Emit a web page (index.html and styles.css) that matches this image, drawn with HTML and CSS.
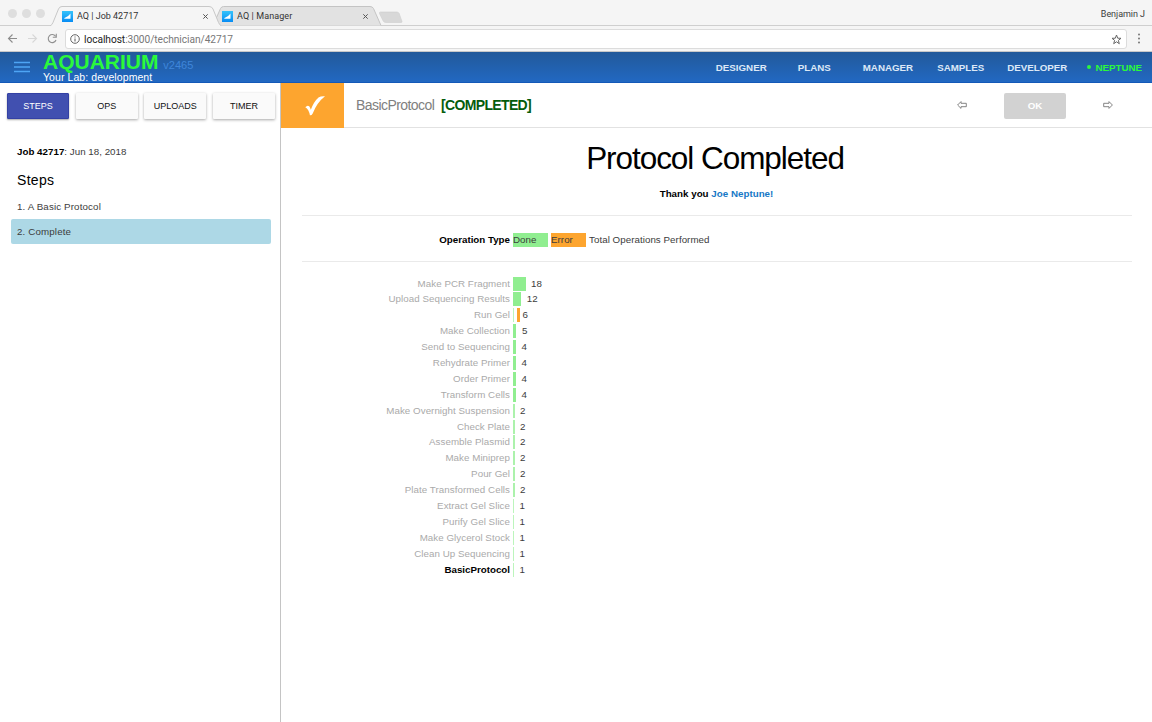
FILE: index.html
```html
<!DOCTYPE html>
<html lang="en">
<head>
<meta charset="utf-8">
<title>AQ | Job 42717</title>
<link rel="stylesheet" href="styles.css">
</head>
<body>
<svg class="defs" width="0" height="0"><defs><linearGradient id="fav" x1="0" y1="0" x2="0" y2="1"><stop offset="0" stop-color="#35c3fa"/><stop offset="1" stop-color="#078cf4"/></linearGradient>
<symbol id="favicon" viewBox="0 0 11 11"><rect width="11" height="11" fill="url(#fav)"/><path d="M2.200 7.800L2.500 7Q6 6 8.500 2.500V7.800Z" fill="#fff"/></symbol></defs></svg>
<div class="tabstrip">
  <svg class="tab-shapes" width="420" height="26" viewBox="0 0 420 26">
    <path d="M0 25.5H420" stroke="#cfcfcf"/>
    <path d="M213 25.5L220.500 8.500Q221.500 6.500 223.500 6.500H370Q372.500 6.500 373.500 8.500L381 25.500" fill="#e2e2e2" stroke="#c4c4c4"/>
    <path d="M50 26Q52 25 53 22.500L58.500 9Q59.500 6.500 62 6.500H209Q212 6.500 213 9L218.500 22.500Q219.500 25 221.500 26" fill="#f5f5f5" stroke="#c8c8c8"/>
    <path d="M380.500 12H397Q398.500 12 399.200 13.500L402 21.500Q402.300 22.500 401 22.500H386Q384 22.500 383.200 21L379.500 13.500Q379 12 380.500 12Z" fill="#d8d8d8" stroke="#cecece" stroke-width=".6"/>
  </svg>
  <div class="lights"><i></i><i></i><i></i></div>
  <div class="tab"><svg width="11" height="11"><use href="#favicon"/></svg><span class="t1">AQ | Job 42717</span><svg class="close" width="5" height="5" viewBox="0 0 5 5"><path d="M.3 .3L4.700 4.700M4.700 .3L.3 4.700" stroke="#555"/></svg></div>
  <div class="tab"><svg width="11" height="11"><use href="#favicon"/></svg><span class="t2">AQ | Manager</span><svg class="close" width="5" height="5" viewBox="0 0 5 5"><path d="M.3 .3L4.700 4.700M4.700 .3L.3 4.700" stroke="#555"/></svg></div>
  <span class="profile">Benjamin J</span>
</div>
<div class="toolbar">
  <svg width="65" height="25" viewBox="0 0 65 25" fill="none" stroke-width="1.1">
    <path d="M17 12.500H8.500M12.500 8.500L8.500 12.500L12.500 16.500" stroke="#8c8c8c"/>
    <path d="M28 12.500H36.500M32.500 8.500L36.500 12.500L32.500 16.500" stroke="#d7d7d7"/>
    <path d="M55.500 10.200A4 4 0 1 0 56 14M56.300 7.800V11.300H52.800" stroke="#909090"/>
  </svg>
  <div class="address">
    <svg width="10" height="10" viewBox="0 0 10 10"><circle cx="5" cy="5" r="4.300" fill="none" stroke="#666"/><path d="M5 4.500V7.500M5 2.500V3.500" stroke="#555"/></svg>
    <span class="url"><b>localhost</b>:3000/technician/42717</span>
    <svg class="star" width="11" height="11" viewBox="0 0 11 11"><path d="M5.500 1L6.700 4.200L10 4.300L7.400 6.400L8.300 9.700L5.500 7.800L2.700 9.700L3.600 6.400L1 4.300L4.300 4.200Z" fill="none" stroke="#666"/></svg>
  </div>
  <svg class="more" width="4" height="11" viewBox="0 0 4 11" fill="#777"><circle cx="2" cy="1.500" r="1"/><circle cx="2" cy="5.500" r="1"/><circle cx="2" cy="9.500" r="1"/></svg>
</div>
<nav class="nav">
  <svg class="menu" width="16" height="12" viewBox="0 0 16 12"><path d="M0 1.500H16M0 6H16M0 10.500H16" stroke="#4ea5f5" stroke-width="1.700"/></svg>
  <div class="brand"><div class="name">AQUARIUM <span>v2465</span></div><div class="lab">Your Lab: development</div></div>
  <div class="links"><a class="l1">DESIGNER</a><a class="l2">PLANS</a><a class="l3">MANAGER</a><a class="l4">SAMPLES</a><a class="l5">DEVELOPER</a><a class="user"><i></i>NEPTUNE</a></div>
</nav>
<div class="page">
  <aside class="sidebar">
    <div class="buttons"><button class="on">STEPS</button><button>OPS</button><button>UPLOADS</button><button>TIMER</button></div>
    <p class="job"><b>Job 42717</b>: Jun 18, 2018</p>
    <h2>Steps</h2>
    <div class="step">1. A Basic Protocol</div>
    <div class="step current">2. Complete</div>
  </aside>
  <main class="main">
    <header class="head">
      <div class="check"><svg width="20" height="20" viewBox="0 0 20 20"><path d="M.3 11.300Q2.500 8.600 4.200 10.300Q5.200 11.500 5.800 13.800Q9 5.500 13.500 1.600Q15.800 0 20 .3Q12 6.500 7.700 17.500Q6.500 19.700 4.900 19.300Q3.900 13.500 .3 11.300Z" fill="#fff"/></svg></div>
      <div class="title">BasicProtocol</div><div class="status">[COMPLETED]</div>
      <svg class="prev" width="10" height="8" viewBox="0 0 10 8"><path d="M.6 4L4 .6V2.300H9.300V5.700H4V7.400Z" fill="none" stroke="#777" stroke-width=".9"/></svg>
      <button class="ok">OK</button>
      <svg class="next" width="10" height="8" viewBox="0 0 10 8"><path d="M9.400 4L6 .6V2.300H.7V5.700H6V7.400Z" fill="none" stroke="#777" stroke-width=".9"/></svg>
    </header>
    <section class="content">
      <h1>Protocol Completed</h1>
      <p class="thanks">Thank you <a>Joe Neptune!</a></p>
      <div class="legend"><b>Operation Type</b><span class="key done">Done</span><span class="key error">Error</span><span class="total">Total Operations Performed</span></div>
      <div class="chart">
        <div class="row"><span class="label">Make PCR Fragment</span><i class="done" style="width:12.5px"></i><i></i><span>18</span></div>
        <div class="row"><span class="label">Upload Sequencing Results</span><i class="done" style="width:8.300px"></i><i></i><span>12</span></div>
        <div class="row"><span class="label">Run Gel</span><i class="done faint" style="width:1px"></i><i class="error" style="width:3px"></i><span>6</span></div>
        <div class="row"><span class="label">Make Collection</span><i class="done" style="width:3.400px"></i><i></i><span>5</span></div>
        <div class="row"><span class="label">Send to Sequencing</span><i class="done" style="width:3px"></i><i></i><span>4</span></div>
        <div class="row"><span class="label">Rehydrate Primer</span><i class="done" style="width:3px"></i><i></i><span>4</span></div>
        <div class="row"><span class="label">Order Primer</span><i class="done" style="width:3px"></i><i></i><span>4</span></div>
        <div class="row"><span class="label">Transform Cells</span><i class="done" style="width:3px"></i><i></i><span>4</span></div>
        <div class="row"><span class="label">Make Overnight Suspension</span><i class="done thin" style="width:2px"></i><i></i><span>2</span></div>
        <div class="row"><span class="label">Check Plate</span><i class="done thin" style="width:2px"></i><i></i><span>2</span></div>
        <div class="row"><span class="label">Assemble Plasmid</span><i class="done thin" style="width:2px"></i><i></i><span>2</span></div>
        <div class="row"><span class="label">Make Miniprep</span><i class="done thin" style="width:2px"></i><i></i><span>2</span></div>
        <div class="row"><span class="label">Pour Gel</span><i class="done thin" style="width:2px"></i><i></i><span>2</span></div>
        <div class="row"><span class="label">Plate Transformed Cells</span><i class="done thin" style="width:2px"></i><i></i><span>2</span></div>
        <div class="row"><span class="label">Extract Gel Slice</span><i class="done faint" style="width:1px"></i><i></i><span>1</span></div>
        <div class="row"><span class="label">Purify Gel Slice</span><i class="done faint" style="width:1px"></i><i></i><span>1</span></div>
        <div class="row"><span class="label">Make Glycerol Stock</span><i class="done faint" style="width:1px"></i><i></i><span>1</span></div>
        <div class="row"><span class="label">Clean Up Sequencing</span><i class="done faint" style="width:1px"></i><i></i><span>1</span></div>
        <div class="row"><span class="label mine">BasicProtocol</span><i class="done faint" style="width:1px"></i><i></i><span>1</span></div>
      </div>
    </section>
  </main>
</div>
</body>
</html>
```
FILE: styles.css
```css
* { box-sizing: border-box; }
body { margin: 0; width: 1152px; height: 722px; overflow: hidden; display: flex; flex-direction: column; background: #fff; font: 9.750px/14px "Liberation Sans", Arial, sans-serif; letter-spacing: .05px; color: #3c3c3c; }
svg { display: block; flex: none; }
p, h1, h2 { margin: 0; }
button { font: inherit; border: 0; padding: 0; }
.defs { position: absolute; }

.tabstrip { position: relative; flex: none; height: 26px; display: flex; background: #f5f5f5; border-bottom: 1px solid #cfcfcf; font-family: Roboto, sans-serif; font-size: 9px; letter-spacing: 0; }
.tab-shapes { position: absolute; left: 0; top: 0; }
.lights { display: flex; gap: 5px; width: 62px; padding: 9px 0 0 8px; }
.lights i { width: 9px; height: 9px; border-radius: 50%; background: #dedede; }
.tab { position: relative; display: flex; align-items: center; width: 160px; height: 20px; margin-top: 6px; }
.tab span { margin-left: 4px; flex: 1; color: #333; }
.tab .t2 { letter-spacing: .1px; }
.tab .close { margin-right: 14px; }
.profile { margin: 7px 7px 0 auto; position: relative; letter-spacing: -.05px; }

.toolbar { flex: none; height: 26px; display: flex; background: #f5f5f5; border-bottom: 1px solid #c8c8c8; }
.address { margin-top: 3px; width: 1062px; height: 20px; display: flex; align-items: center; background: #fff; border: 1px solid #dcdcdc; border-radius: 3px; padding: 0 4px; font: 10.200px/18px Roboto, sans-serif; color: #777; }
.url { margin-left: 4px; flex: 1; letter-spacing: -.06px; padding-top: 1px; }
.url b { font-weight: 400; color: #222; }
.more { margin: 7px 0 0 10px; }

.nav { flex: none; height: 31px; display: flex; background: linear-gradient(#22599a, #2268c2); border-bottom: 1px solid #1459b8; color: #dce8f7; }
.menu { margin: 9px 0 0 14px; }
.brand { margin-left: 13px; width: 250px; }
.name { height: 20px; font-weight: 700; font-size: 21px; line-height: 20px; letter-spacing: 0; color: #2bf83b; white-space: nowrap; }
.name span { font-weight: 400; font-size: 11px; color: #3f86da; margin-left: -1px; }
.lab { font-size: 10.500px; line-height: 10px; letter-spacing: .08px; color: #fff; }
.links { margin-left: auto; margin-right: 10px; padding-top: 1px; display: flex; align-items: center; letter-spacing: 0; font-weight: 700; }
.l1 { margin-right: 31px; }
.l2 { margin-right: 32px; }
.l3 { margin-right: 24px; }
.l4 { margin-right: 23px; }
.l5 { margin-right: 20px; }
.user { color: #2bf83b; }
.user i { display: inline-block; width: 4px; height: 4px; border-radius: 50%; background: #2bf83b; margin: 0 4px 2px 0; }

.page { flex: 1; display: flex; }
.sidebar { width: 281px; border-right: 1px solid #c4c4c4; }
.buttons { display: flex; gap: 6.700px; padding: 10px 0 0 7px; }
.buttons button { width: 62px; height: 26px; background: #fafafa; color: #111; font-size: 9px; border-radius: 1px; box-shadow: 0 1px 3px rgba(0,0,0,.35); }
.buttons .on { background: #4150b0; color: #fff; box-shadow: 0 1px 2px rgba(0,0,0,.35); border: 1px solid #3441a4; }
.job { margin: 26px 0 0 17px; letter-spacing: .02px; }
.job b { color: #000; }
h2 { margin: 12px 0 0 17px; font-weight: 400; font-size: 14px; line-height: 18px; letter-spacing: .3px; color: #000; }
.step { height: 25px; width: 260px; margin-left: 11px; padding-left: 6px; line-height: 25px; border-radius: 2px; letter-spacing: .14px; }
h2 + .step { margin-top: 5px; }
.current { background: #add8e6; }

.main { flex: 1; }
.head { height: 45px; display: flex; align-items: center; border-bottom: 1px solid #e2e2e2; }
.check { width: 63px; height: 45px; background: #fda52f; margin-bottom: -1px; display: flex; align-items: center; justify-content: center; padding-left: 5px; }
.title { margin-left: 12px; width: 85px; font-size: 14px; letter-spacing: -.57px; color: #808080; white-space: nowrap; }
.status { font-size: 14px; font-weight: 700; letter-spacing: -.65px; color: #055c0c; }
.prev { margin-left: auto; }
.ok { width: 62px; height: 26px; margin: 1px 37px 0; border-radius: 2px; background: #d2d2d2; color: #fff; font-weight: 700; }
.next { margin-right: 39px; }
.content { padding: 0 20px 0 21px; }
h1 { height: 59px; padding-right: 4px; text-align: center; font-weight: 400; font-size: 31.500px; line-height: 60px; letter-spacing: -1.050px; color: #000; }
.thanks { height: 28px; padding-right: 1px; text-align: center; font-weight: 700; letter-spacing: .02px; color: #000; }
.thanks a { color: #1678c6; }
.legend { height: 47px; display: flex; align-items: center; border: solid #eaeaea; border-width: 1px 0; padding-top: 2px; }
.legend b { width: 208px; margin-right: 3px; text-align: right; letter-spacing: 0; color: #000; }
.key { width: 35px; height: 14px; margin-right: 3px; }
.done { background: #90ee90; }
.error { background: #fda52f; }
.chart { padding-top: 14.500px; }
.row { display: flex; height: 15.900px; }
.row .label { width: 208px; margin-right: 3px; text-align: right; color: #aaa; }
.row .mine { color: #000; font-weight: 700; letter-spacing: 0; }
.row i { height: 14px; margin-right: 3px; }
.row i + i { margin-right: 2.500px; }
.row .thin { opacity: .75; margin-right: 2.400px; }
.row .faint { opacity: .6; }
```
